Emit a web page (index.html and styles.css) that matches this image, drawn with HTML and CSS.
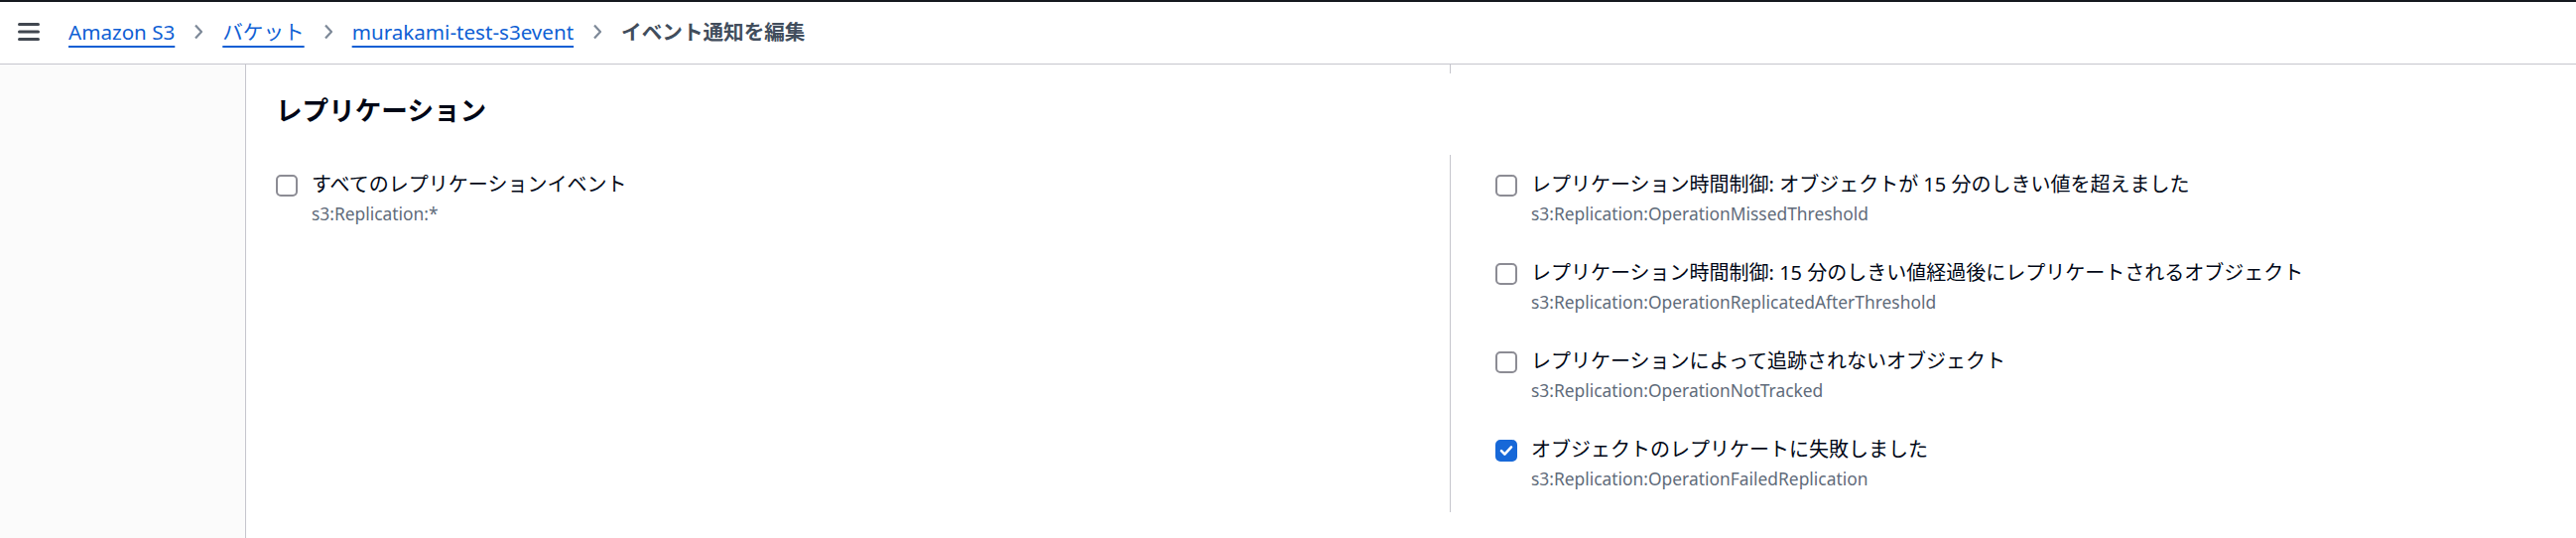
FILE: index.html
```html
<!DOCTYPE html>
<html lang="ja">
<head>
<meta charset="utf-8">
<title>イベント通知を編集</title>
<link rel="stylesheet" href="styles.css">
</head>
<body>
<div class="topbar"></div>
<header class="header">
  <span class="menu" aria-label="メニュー">
    <svg width="22" height="18" viewBox="0 0 22 18"><path d="M1.5 1.5h19M1.5 9h19M1.5 16.5h19" stroke="#414750" stroke-width="3" stroke-linecap="round" fill="none"/></svg>
  </span>
  <nav class="crumbs">
    <a class="crumb-link" href="#">Amazon S3</a>
    <svg class="chev" width="10" height="16" viewBox="0 0 10 16"><path d="M2 1.5l6 6.5-6 6.5" stroke="#7d8998" stroke-width="2.2" fill="none" stroke-linejoin="round"/></svg>
    <a class="crumb-link" href="#">バケット</a>
    <svg class="chev" width="10" height="16" viewBox="0 0 10 16"><path d="M2 1.5l6 6.5-6 6.5" stroke="#7d8998" stroke-width="2.2" fill="none" stroke-linejoin="round"/></svg>
    <a class="crumb-link" href="#">murakami-test-s3event</a>
    <svg class="chev" width="10" height="16" viewBox="0 0 10 16"><path d="M2 1.5l6 6.5-6 6.5" stroke="#7d8998" stroke-width="2.2" fill="none" stroke-linejoin="round"/></svg>
    <span class="crumb-current">イベント通知を編集</span>
  </nav>
</header>
<div class="layout">
  <aside class="side"></aside>
  <main class="main">
    <div class="cols tail"><div class="col-left"></div><div class="col-right"></div></div>
    <h2 class="heading">レプリケーション</h2>
    <div class="cols">
      <div class="col-left">
        <label class="item">
          <span class="box"></span>
          <span class="text"><span class="label">すべてのレプリケーションイベント</span><span class="desc">s3:Replication:*</span></span>
        </label>
      </div>
      <div class="col-right">
        <label class="item">
          <span class="box"></span>
          <span class="text"><span class="label">レプリケーション時間制御: オブジェクトが 15 分のしきい値を超えました</span><span class="desc">s3:Replication:OperationMissedThreshold</span></span>
        </label>
        <label class="item">
          <span class="box"></span>
          <span class="text"><span class="label">レプリケーション時間制御: 15 分のしきい値経過後にレプリケートされるオブジェクト</span><span class="desc">s3:Replication:OperationReplicatedAfterThreshold</span></span>
        </label>
        <label class="item">
          <span class="box"></span>
          <span class="text"><span class="label">レプリケーションによって追跡されないオブジェクト</span><span class="desc">s3:Replication:OperationNotTracked</span></span>
        </label>
        <label class="item">
          <span class="box checked"><svg width="14" height="12" viewBox="0 0 14 12"><path d="M2 6.2l3.4 3.4L12 2.4" stroke="#fff" stroke-width="2.6" fill="none" stroke-linecap="round" stroke-linejoin="round"/></svg></span>
          <span class="text"><span class="label">オブジェクトのレプリケートに失敗しました</span><span class="desc">s3:Replication:OperationFailedReplication</span></span>
        </label>
      </div>
    </div>
  </main>
</div>
</body>
</html>
```
FILE: styles.css
```css
* { box-sizing: border-box; }
html, body { margin: 0; padding: 0; }
body {
  width: 2596px;
  height: 542px;
  overflow: hidden;
  background: #ffffff;
  font-family: "Noto Sans", "Noto Sans CJK JP", sans-serif;
  color: #000716;
}
.topbar { height: 2px; background: #16191f; }
.header {
  height: 63px;
  border-bottom: 1px solid #c6c6cd;
  display: flex;
  align-items: center;
  padding-left: 18px;
  padding-bottom: 2px;
}
.menu { display: flex; width: 22px; height: 18px; margin-right: 29px; }
.crumbs { display: flex; align-items: center; font-size: 20.6px; line-height: 28px; }
.crumb-link {
  color: #0f5fd4;
  text-decoration: underline;
  text-decoration-thickness: 2px;
  text-underline-offset: 6px;
}
.chev { margin: 0 19px; flex: none; }
.crumb-current { color: #414d5c; font-weight: 700; }
.layout { display: flex; height: 477px; }
.side {
  width: 248px;
  flex: none;
  background: #fbfbfb;
  border-right: 1px solid #c6c6cd;
}
.main { flex: 1; padding: 0 30px; }
.cols { display: grid; grid-template-columns: 1183px 1fr; margin-top: 27px; }
.tail { height: 9px; margin-top: 0; }
.col-left { padding-top: 15px; }
.col-right {
  border-left: 1px solid #c6c6cd;
  padding: 15px 0 21px 45px;
  display: flex;
  flex-direction: column;
  gap: 32px;
}
.tail .col-left, .tail .col-right { padding: 0; }
.heading {
  margin: 19px 0 0;
  font-size: 26.6px;
  line-height: 36px;
  font-weight: 700;
  color: #000716;
}
.item { display: flex; gap: 14px; align-items: flex-start; }
.box {
  width: 22px;
  height: 22px;
  flex: none;
  margin-top: 5px;
  border: 2px solid #8c8c94;
  border-radius: 5px;
  background: #fff;
  display: flex;
  align-items: center;
  justify-content: center;
}
.box.checked { background: #1768d8; border-color: #1768d8; }
.text { display: flex; flex-direction: column; }
.label { font-size: 20px; line-height: 30px; color: #000716; }
.desc { font-size: 17.4px; line-height: 26px; margin-top: 1px; color: #5f6b7a; }
```
